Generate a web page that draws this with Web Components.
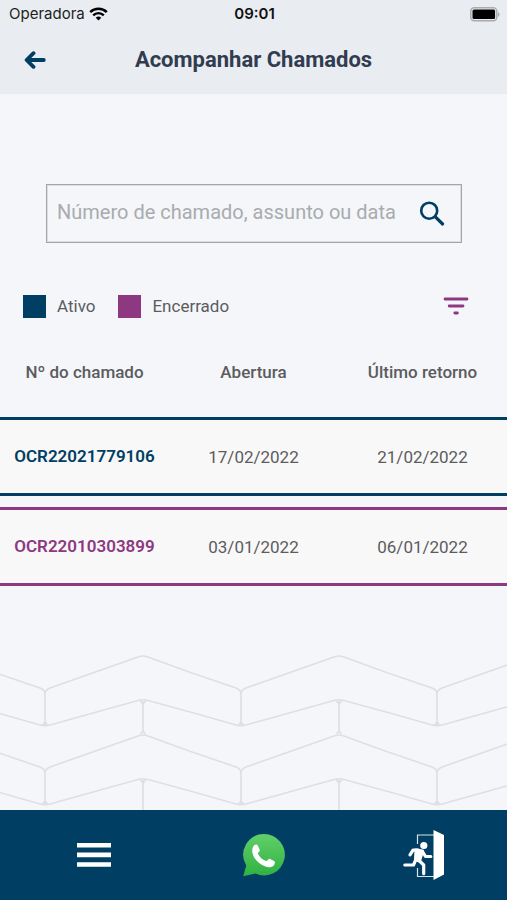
<!DOCTYPE html>
<html lang="pt-BR">
<head>
<meta charset="utf-8">
<meta name="viewport" content="width=device-width, initial-scale=1">
<title>Acompanhar Chamados</title>
<style>
  :root {
    --navy: #013e63;
    --purple: #8d3881;
    --text: #5c5c5e;
    --page: #f4f6fa;
    --bar: #e9edf1;
  }
  body {
    margin: 0;
    background: var(--page);
    color: var(--text);
    font-family: Roboto, "Liberation Sans", sans-serif;
    font-size: 17px;
    line-height: 24px;
  }
</style>
</head>
<body>
<tickets-app>
  <status-bar slot="top" carrier="Operadora" time="09:01"></status-bar>
  <page-header slot="top">Acompanhar Chamados</page-header>
  <search-box placeholder="Número de chamado, assunto ou data"></search-box>
  <filter-row>
    <legend-item>Ativo</legend-item>
    <legend-item kind="closed">Encerrado</legend-item>
  </filter-row>
  <ticket-table></ticket-table>
  <chevron-pattern></chevron-pattern>
  <bottom-nav slot="bottom"></bottom-nav>
</tickets-app>

<script>
class BaseElement extends HTMLElement {
  constructor() {
    super();
    this.attachShadow({ mode: "open" });
  }

  connectedCallback() {
    this.shadowRoot.innerHTML = `
      <style>
        :host { display: block; }
        * { box-sizing: border-box; }
        svg { display: block; }
        button {
          padding: 0;
          border: none;
          background: none;
          cursor: pointer;
        }
      </style>
      ${this.render()}
    `;
  }
}

class TicketsApp extends BaseElement {
  render() {
    return `
      <style>
        :host {
          display: flex;
          flex-direction: column;
          min-height: 100vh;
        }
        header { background: var(--bar); }
        main {
          flex: 1;
          display: flex;
          flex-direction: column;
          padding-top: 90px;
        }
      </style>
      <header><slot name="top"></slot></header>
      <main><slot></slot></main>
      <slot name="bottom"></slot>
    `;
  }
}

class StatusBar extends BaseElement {
  render() {
    return `
      <style>
        :host {
          display: grid;
          grid-template-columns: 1fr auto 1fr;
          align-items: center;
          padding: 2px 7px 2px 9px;
          color: #1d1f21;
          font-family: Inter, "Liberation Sans", sans-serif;
          font-size: 15px;
        }
        .carrier { display: flex; align-items: center; gap: 4px; }
        .time { font-weight: 600; color: #111; }
        .battery { justify-self: end; }
      </style>
      <span class="carrier">
        ${this.getAttribute("carrier")}
        <svg width="19" height="14" viewBox="0 0 19 14" fill="none" stroke="#000" stroke-width="2.4">
          <path d="M1.2 5.2a11.8 11.8 0 0 1 16.6 0"/>
          <path d="M4.2 8.3a7.5 7.5 0 0 1 10.6 0"/>
          <path d="M9.500 13.500L6.700 10.800a4 4 0 0 1 5.600 0z" fill="#000" stroke="none"/>
        </svg>
      </span>
      <span class="time">${this.getAttribute("time")}</span>
      <svg class="battery" width="30" height="15" viewBox="0 0 30 15">
        <rect x=".8" y=".8" width="26" height="13" rx="3.500" fill="none" stroke="#aaacae" stroke-width="1.500"/>
        <rect x="2.500" y="2.500" width="22.600" height="9.600" rx="1.500" fill="#000"/>
        <path d="M28 5a2.800 2.800 0 0 1 0 5z" fill="#aaacae"/>
      </svg>
    `;
  }
}

class PageHeader extends BaseElement {
  render() {
    return `
      <style>
        :host {
          display: grid;
          grid-template-columns: 48px 1fr 48px;
          align-items: center;
          padding: 8px 11px 10px;
        }
        button {
          display: grid;
          place-items: center;
          height: 48px;
        }
        h1 {
          margin: 0;
          color: #313c50;
          font-size: 22px;
          font-weight: 700;
          line-height: 32px;
          text-align: center;
        }
      </style>
      <button type="button" aria-label="Voltar">
        <svg width="22" height="20" viewBox="0 0 22 20" fill="none" stroke="var(--navy)"
          stroke-width="3.800" stroke-linecap="round" stroke-linejoin="round">
          <path d="M19.800 10H3M9.500 3.200L2.600 10l6.900 6.800"/>
        </svg>
      </button>
      <h1><slot></slot></h1>
    `;
  }
}

class SearchBox extends BaseElement {
  render() {
    const placeholder = this.getAttribute("placeholder") || "";

    return `
      <style>
        form {
          display: flex;
          align-items: center;
          height: 59px;
          margin: 0 45px 0 46px;
          padding: 0 12px 0 10px;
          border: 1px solid #a4a5a8;
          outline: 1px solid #dcdde0;
          outline-offset: -2px;
        }
        input {
          flex: 1;
          min-width: 0;
          height: 40px;
          padding: 0 0 4px;
          border: none;
          outline: none;
          background: none;
          color: var(--text);
          font: inherit;
          font-size: 20px;
        }
        input::placeholder { color: #a9abae; opacity: 1; }
        button {
          display: grid;
          place-items: center;
          width: 34px;
          height: 40px;
        }
      </style>
      <form role="search">
        <input type="text" aria-label="${placeholder}" placeholder="${placeholder}">
        <button type="button" aria-label="Buscar">
          <svg width="26" height="26" viewBox="0 0 26 26" fill="none" stroke="var(--navy)" stroke-linecap="round">
            <circle cx="10.200" cy="9.700" r="8" stroke-width="2.600"/>
            <path d="M16.600 16.200l7 6.800" stroke-width="3.200"/>
          </svg>
        </button>
      </form>
    `;
  }
}

class LegendItem extends BaseElement {
  render() {
    const color = this.getAttribute("kind") === "closed" ? "--purple" : "--navy";

    return `
      <style>
        :host {
          display: flex;
          align-items: center;
          gap: 11px;
        }
        i {
          width: 23px;
          height: 23px;
          background: var(${color});
        }
      </style>
      <i></i><slot></slot>
    `;
  }
}

class FilterRow extends BaseElement {
  render() {
    return `
      <style>
        :host {
          display: flex;
          align-items: center;
          gap: 23px;
          margin-top: 43px;
          padding: 0 31px 0 23px;
        }
        button {
          display: grid;
          place-items: center;
          width: 40px;
          height: 40px;
          margin-left: auto;
        }
      </style>
      <slot></slot>
      <button type="button" aria-label="Filtrar">
        <svg width="26" height="18" viewBox="0 0 26 18" fill="none" stroke="var(--purple)"
          stroke-width="2.800" stroke-linecap="round">
          <path d="M2 2h22M6.200 9h13.800M11.800 16h2.600"/>
        </svg>
      </button>
    `;
  }
}

class TicketTable extends BaseElement {
  get tickets() {
    return [
      { id: "OCR22021779106", opened: "17/02/2022", returned: "21/02/2022", status: "active" },
      { id: "OCR22010303899", opened: "03/01/2022", returned: "06/01/2022", status: "closed" },
    ];
  }

  render() {
    const rows = this.tickets
      .map(
        (t) => `
          <tr class="${t.status}">
            <th scope="row">${t.id}</th>
            <td>${t.opened}</td>
            <td>${t.returned}</td>
          </tr>`
      )
      .join("");

    return `
      <style>
        :host { margin-top: 23px; }
        table {
          width: 100%;
          table-layout: fixed;
          border-spacing: 0 11px;
        }
        th, td { padding: 0; text-align: center; }
        thead th { height: 46px; padding-bottom: 22px; font-weight: 500; }
        tbody th, td {
          height: 79px;
          border: solid;
          border-width: 3px 0;
          background: #f8f8f8;
        }
        tbody th { padding-bottom: 2px; font-weight: 600; }
        .active > * { border-color: var(--navy); }
        .active th { color: var(--navy); }
        .closed > * { border-color: var(--purple); }
        .closed th { color: var(--purple); }
      </style>
      <table>
        <thead>
          <tr>
            <th scope="col">Nº do chamado</th>
            <th scope="col">Abertura</th>
            <th scope="col">Último retorno</th>
          </tr>
        </thead>
        <tbody>${rows}</tbody>
      </table>
    `;
  }
}

class ChevronPattern extends BaseElement {
  render() {
    return `
      <style>
        :host { margin-top: auto; }
      </style>
      <svg width="100%" height="155" aria-hidden="true">
        <defs>
          <pattern id="chevrons" x="-4" width="196" height="79" patternUnits="userSpaceOnUse">
            <g fill="none" stroke="#dddfe1" stroke-width="1.600">
              <path d="M0 18L44 33Q49 35 49 39Q49 35 54 33L142 2Q147 0 152 2L196 18"/>
              <path d="M0 57.500L44 70Q49 71.500 54 70L142 45.500Q147 44 152 45.500L196 57.500"/>
              <path d="M49 37v33M46 70.500L49 67L52 70.500M147 46v31M144 45.500L147 49L150 45.500M147 76L144 80M147 76L150 80"/>
            </g>
          </pattern>
        </defs>
        <rect width="100%" height="155" fill="url(#chevrons)"/>
      </svg>
    `;
  }
}

class BottomNav extends BaseElement {
  render() {
    return `
      <style>
        nav {
          display: grid;
          grid-template-columns: 188fr 152fr 167fr;
          height: 90px;
          background: var(--navy);
        }
        button { display: grid; place-items: center; }
      </style>
      <nav>
        <button type="button" aria-label="Menu">
          <svg width="34" height="24" viewBox="0 0 34 24" fill="#fff">
            <path d="M0 0h34v4.600H0zM0 9.600h34v4.600H0zM0 19.200h34v4.600H0z"/>
          </svg>
        </button>
        <button type="button" aria-label="WhatsApp">
          <svg width="42" height="44" viewBox="0 0 42 44">
            <defs>
              <linearGradient id="green" x2="0" y2="1">
                <stop offset="0" stop-color="#62cf68"/>
                <stop offset="1" stop-color="#2fb143"/>
              </linearGradient>
            </defs>
            <path fill="url(#green)" d="M21 1A20.700 20.700 0 1 1 12.500 40.500L.2 43.200L3.300 32.500A20.700 20.700 0 0 1 21 1z"/>
            <path fill="#fff" d="M10.400 13.300c1.600-2.400 3.500-2.300 4.400-.7l1.900 4.200c.5 1.200-1.500 2.600-1.900 3.600 1.800 3.600 4.600 6.200 8.300 7.700 1.200-.1 2.300-2.700 3.500-2.400l4.500 2.200c1.400.8.800 2.800-.2 4.300-2 2.200-5.200 2.600-8.600 1.300C15.700 30.900 10.900 26.200 9.500 19.900c-.5-2.400-.3-4.800.9-6.600z"/>
          </svg>
        </button>
        <button type="button" aria-label="Sair">
          <svg width="42" height="50" viewBox="0 0 42 50" fill="none" stroke="#fff">
            <path d="M14.500 14V5H31M14.500 38V46.500H31" stroke-width="1.200" opacity=".85"/>
            <path d="M30.500 0L41 5v39.500L30.500 50z" fill="#fff" stroke="none"/>
            <circle cx="20.800" cy="15.500" r="3.600" fill="#fff" stroke="none"/>
            <path d="M13 20l6.500 1-3 10-4-1.500z" fill="#fff" stroke-width="3" stroke-linejoin="round"/>
            <path d="M15.500 20.200h-5.500l-3 4.600M19.500 21.500l3 5h5.300M13.500 28l-3 7H1.800M15.500 30l5.200 5v8.700"
              stroke-width="3.200" stroke-linecap="round" stroke-linejoin="round"/>
          </svg>
        </button>
      </nav>
    `;
  }
}

customElements.define("status-bar", StatusBar);
customElements.define("page-header", PageHeader);
customElements.define("search-box", SearchBox);
customElements.define("legend-item", LegendItem);
customElements.define("filter-row", FilterRow);
customElements.define("ticket-table", TicketTable);
customElements.define("chevron-pattern", ChevronPattern);
customElements.define("bottom-nav", BottomNav);
customElements.define("tickets-app", TicketsApp);
</script>
</body>
</html>
